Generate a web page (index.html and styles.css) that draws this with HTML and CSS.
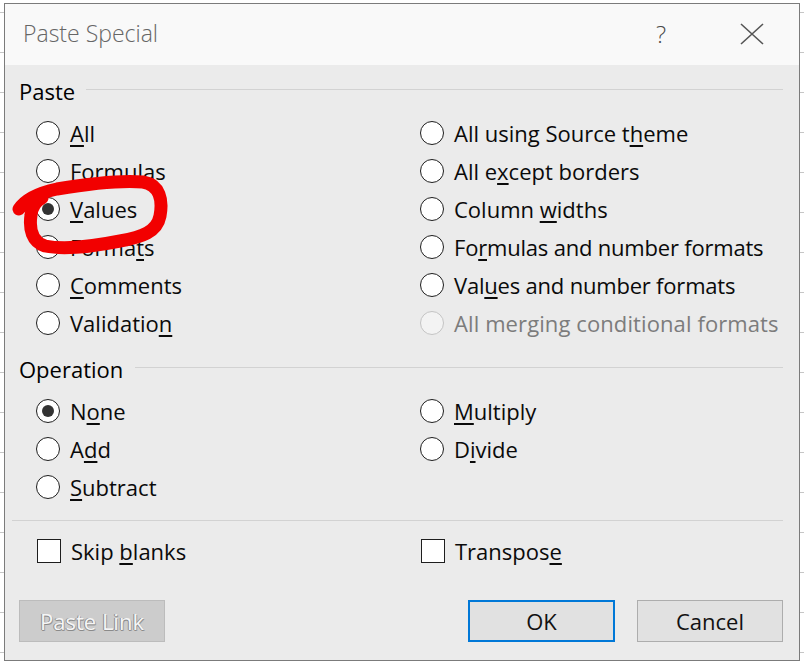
FILE: index.html
```html
<!DOCTYPE html>
<html>
<head>
<meta charset="utf-8">
<title>Paste Special</title>
<link rel="stylesheet" href="styles.css">
</head>
<body>
<div class="screen">
  <div class="dialog">
    <div class="titlebar">
      <span class="title">Paste Special</span>
      <span class="help">?</span>
      <span class="close">
        <svg width="24" height="22" viewBox="0 0 24 22"><path d="M1 1 L23 21 M23 1 L1 21" stroke="#555" stroke-width="1.6" fill="none"/></svg>
      </span>
    </div>
    <div class="body">
      <div class="group-head"><span>Paste</span><i class="rule"></i></div>
      <div class="cols paste-cols">
        <div class="col col-left">
          <div class="opt"><span class="radio"></span><span><u>A</u>ll</span></div>
          <div class="opt"><span class="radio"></span><span><u>F</u>ormulas</span></div>
          <div class="opt"><span class="radio checked"></span><span><u>V</u>alues</span></div>
          <div class="opt"><span class="radio"></span><span>Forma<u>t</u>s</span></div>
          <div class="opt"><span class="radio"></span><span><u>C</u>omments</span></div>
          <div class="opt"><span class="radio"></span><span>Validatio<u>n</u></span></div>
        </div>
        <div class="col">
          <div class="opt"><span class="radio"></span><span>All using Source t<u>h</u>eme</span></div>
          <div class="opt"><span class="radio"></span><span>All e<u>x</u>cept borders</span></div>
          <div class="opt"><span class="radio"></span><span>Column <u>w</u>idths</span></div>
          <div class="opt"><span class="radio"></span><span class="tight">Fo<u>r</u>mulas and number formats</span></div>
          <div class="opt"><span class="radio"></span><span class="tight">Val<u>u</u>es and number formats</span></div>
          <div class="opt disabled"><span class="radio"></span><span>All merging conditional formats</span></div>
        </div>
      </div>
      <div class="group-head op-head"><span>Operation</span><i class="rule"></i></div>
      <div class="cols op-cols">
        <div class="col col-left">
          <div class="opt"><span class="radio checked"></span><span>N<u>o</u>ne</span></div>
          <div class="opt"><span class="radio"></span><span>A<u>d</u>d</span></div>
          <div class="opt"><span class="radio"></span><span><u>S</u>ubtract</span></div>
        </div>
        <div class="col">
          <div class="opt"><span class="radio"></span><span><u>M</u>ultiply</span></div>
          <div class="opt"><span class="radio"></span><span>D<u>i</u>vide</span></div>
        </div>
      </div>
      <div class="separator"></div>
      <div class="cols check-cols">
        <div class="col col-left">
          <div class="opt"><span class="checkbox"></span><span>Skip <u>b</u>lanks</span></div>
        </div>
        <div class="col">
          <div class="opt"><span class="checkbox"></span><span>Transpos<u>e</u></span></div>
        </div>
      </div>
      <div class="buttons">
        <button class="btn btn-disabled">Paste <u>L</u>ink</button>
        <span class="spacer"></span>
        <button class="btn btn-default">OK</button>
        <button class="btn">Cancel</button>
      </div>
    </div>
  </div>
  <svg class="scribble" width="804" height="664" viewBox="0 0 804 664">
    <path d="M19,209 C25,200 38,193 57,189 C87,184 120,180 143,182 C160,185 163,200 160,216 C157,232 142,237 120,241 C95,246 65,250 45,246 C32,242 29,229 31,215 C32,206 36,201 42,198"
      stroke="#f20000" stroke-width="13" fill="none" stroke-linecap="round" stroke-linejoin="round"/>
  </svg>
</div>
</body>
</html>
```
FILE: styles.css
```css
html, body {
  margin: 0;
  padding: 0;
}
body {
  width: 804px;
  height: 664px;
  overflow: hidden;
  background-color: #ffffff;
  background-image: repeating-linear-gradient(to bottom, transparent 0, transparent 12px, #c6c6c6 12px, #c6c6c6 13px, transparent 13px, transparent 40px);
  font-family: "Open Sans", "Noto Sans", sans-serif;
}
.screen {
  position: relative;
  width: 804px;
  height: 664px;
  padding-top: 3px;
  padding-left: 4px;
  box-sizing: border-box;
}
.dialog {
  width: 796px;
  height: 658px;
  box-sizing: border-box;
  border: 1px solid #7b7b7b;
  background: #ebebeb;
  display: flex;
  flex-direction: column;
}
.titlebar {
  height: 61px;
  box-sizing: border-box;
  flex: none;
  background: #f9f9f9;
  display: flex;
  align-items: center;
  padding-left: 18px;
  padding-right: 35px;
  padding-bottom: 3px;
}
.title {
  font-size: 23px;
  font-weight: 300;
  color: #666666;
}
.help {
  margin-left: auto;
  font-size: 24px;
  font-weight: 300;
  color: #4a4a4a;
  margin-right: 74px;
}
.close {
  display: flex;
  align-items: center;
  margin-top: 2px;
}
.body {
  flex: 1;
  padding: 14px 16px 0 14px;
  display: flex;
  flex-direction: column;
  font-size: 22px;
  color: #0a0a0a;
}
.group-head {
  display: flex;
  align-items: center;
  height: 24px;
  line-height: 24px;
  color: #000;
}
.group-head .rule {
  flex: 1;
  height: 1px;
  background: #d2d2d2;
  margin-left: 11px;
  margin-bottom: 4px;
}
.op-head .rule {
  margin-left: 12px;
}
.cols {
  display: flex;
  padding-left: 17px;
}
.paste-cols {
  margin-top: 11px;
}
.op-head {
  margin-top: 15px;
}
.op-cols {
  margin-top: 11px;
  height: 114px;
}
.col {
  display: flex;
  flex-direction: column;
}
.col-left {
  width: 384px;
  flex: none;
}
.opt {
  height: 38px;
  display: flex;
  align-items: center;
  gap: 10px;
  white-space: nowrap;
}
.opt .tight {
  letter-spacing: -0.2px;
}
.opt u {
  text-decoration-thickness: 2px;
  text-underline-offset: 3px;
}
.radio {
  width: 24px;
  height: 24px;
  box-sizing: border-box;
  border: 1.5px solid #1e1e1e;
  border-radius: 50%;
  background: #ffffff;
  flex: none;
  display: flex;
  align-items: center;
  justify-content: center;
}
.radio.checked::after {
  content: "";
  width: 12px;
  height: 12px;
  border-radius: 50%;
  background: #333333;
}
.opt.disabled {
  color: #7c7c7c;
}
.opt.disabled span:last-child {
  letter-spacing: 0.1px;
}
.opt.disabled .radio {
  border-color: #c4c4c4;
  background: #f3f3f3;
}
.separator {
  height: 1px;
  background: #d2d2d2;
  margin: 14px 0 0 -7px;
}
.check-cols {
  margin-top: 11px;
}
.checkbox {
  width: 24px;
  height: 24px;
  box-sizing: border-box;
  border: 1.5px solid #1e1e1e;
  background: #ffffff;
  flex: none;
  margin-left: 1px;
}
.buttons {
  margin-top: 30px;
  display: flex;
  align-items: center;
  gap: 22px;
}
.spacer {
  flex: 1;
}
.btn {
  width: 146px;
  height: 42px;
  box-sizing: border-box;
  border: 1px solid #adadad;
  background: #e1e1e1;
  font-family: "Open Sans", "Noto Sans", sans-serif;
  font-size: 22px;
  color: #111;
  padding: 0;
  margin: 0;
}
.btn u {
  text-decoration: none;
}
.btn-disabled {
  background: #cccccc;
  border-color: #bcbcbc;
  color: #f6f6f6;
  text-shadow: -1px 0 0 #8a8a8a, 0 1px 0 #8a8a8a, 1px 1px 0 #a0a0a0;
}
.btn-default {
  width: 147px;
  border: 2px solid #0078d7;
}
.scribble {
  position: absolute;
  left: 0;
  top: 0;
  pointer-events: none;
}
```
